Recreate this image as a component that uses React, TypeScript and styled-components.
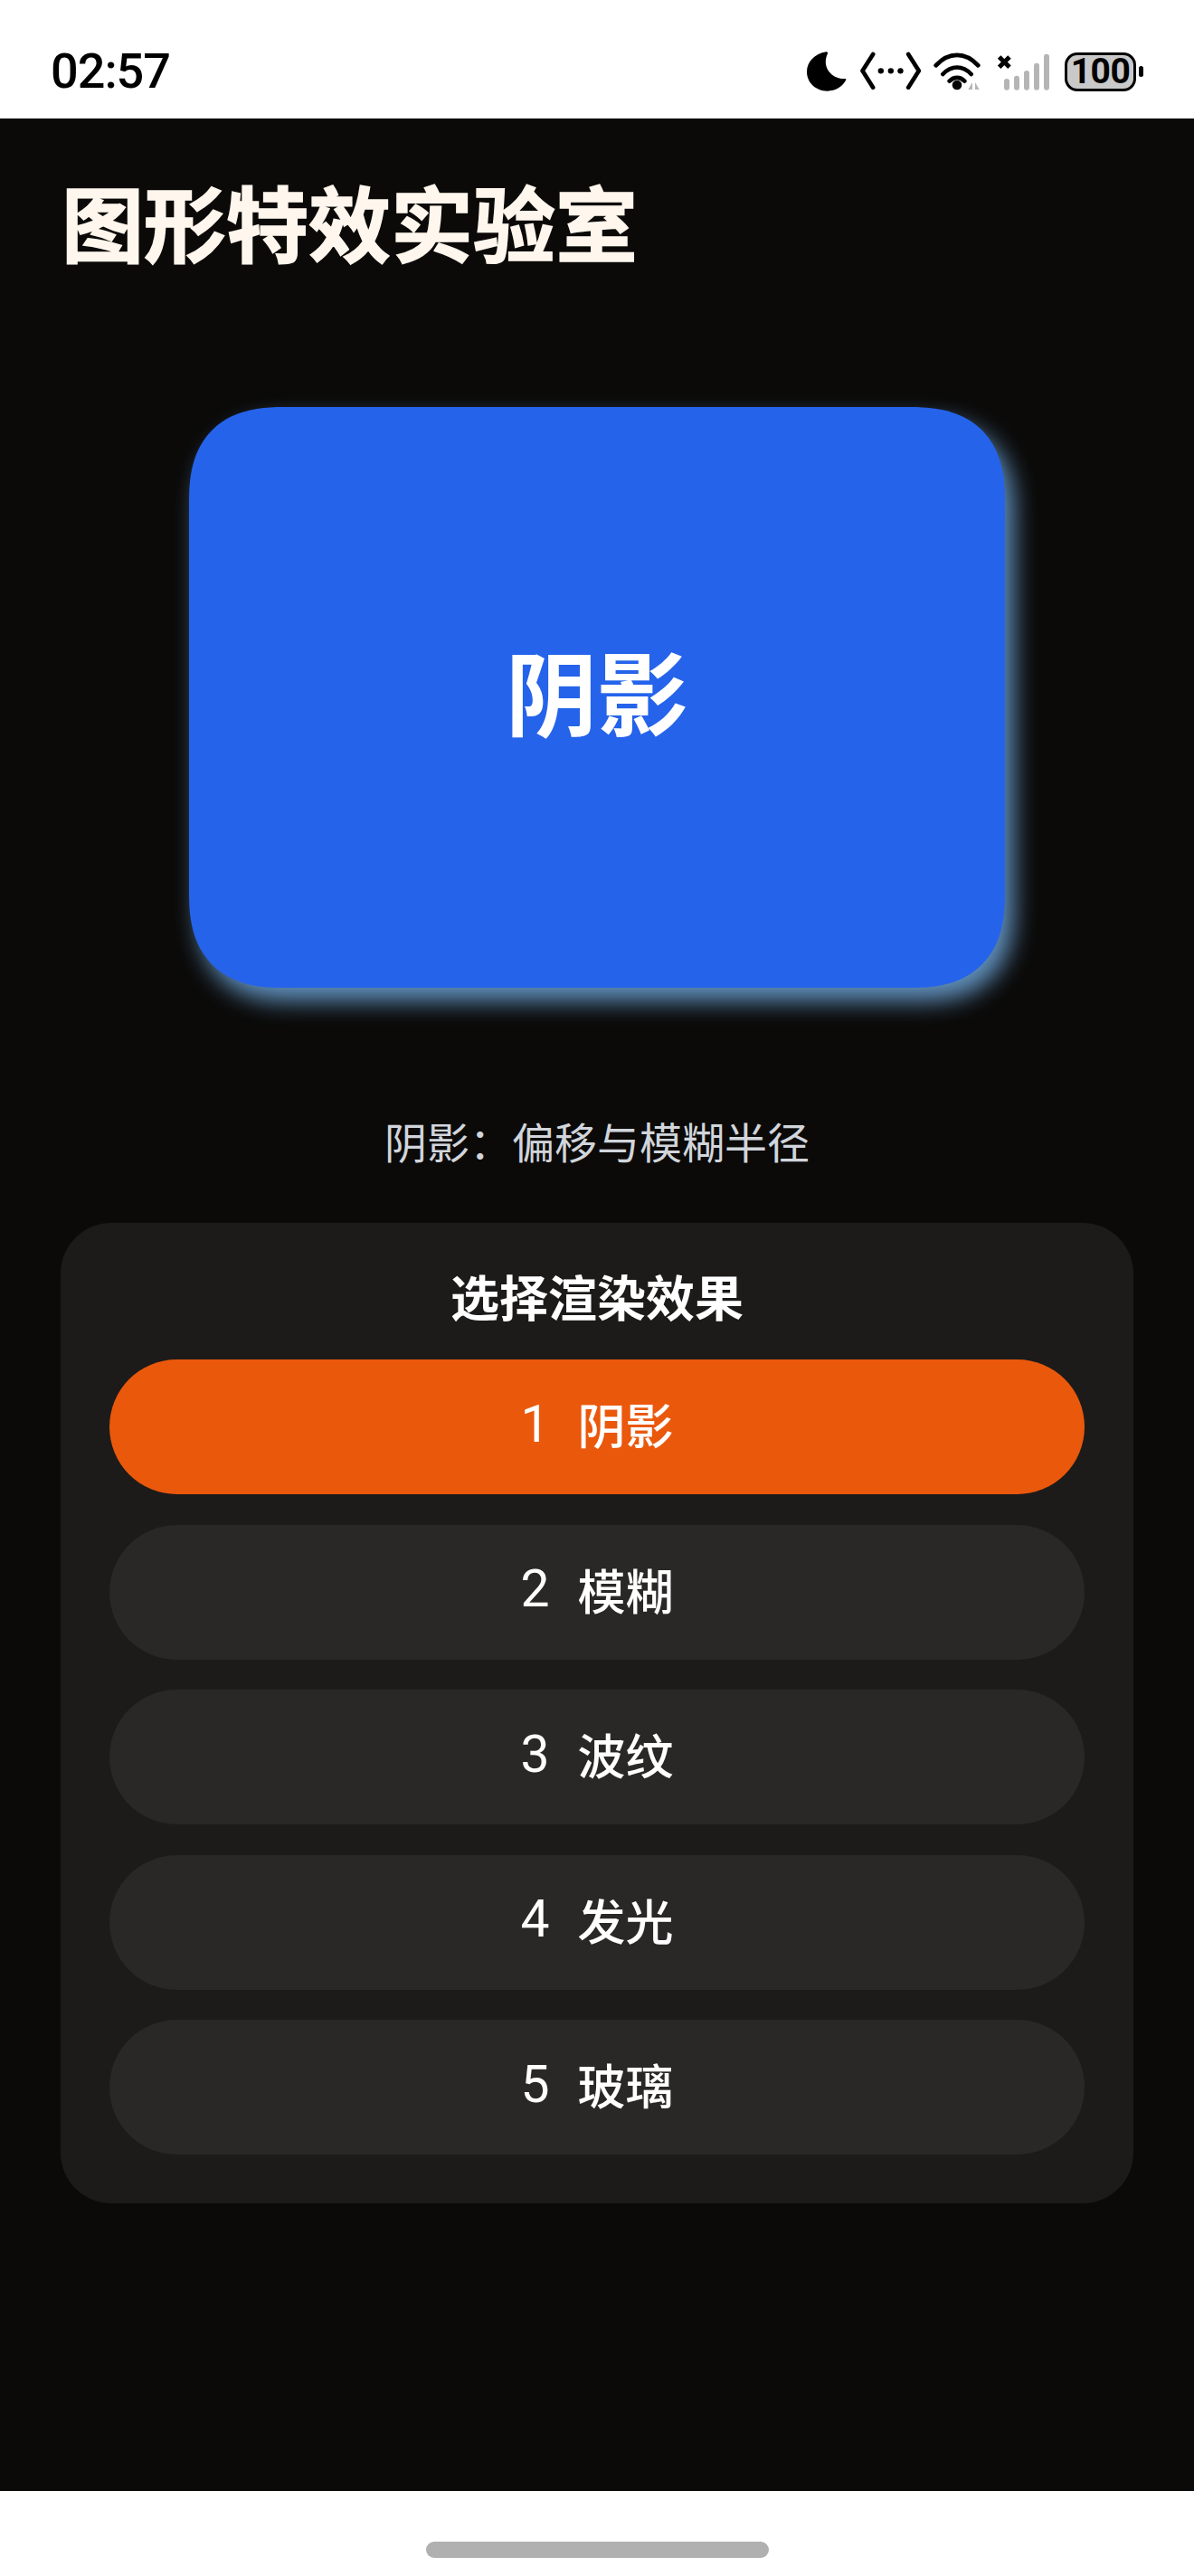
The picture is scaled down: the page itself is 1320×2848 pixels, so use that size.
import styled, { createGlobalStyle } from 'styled-components';

const GlobalStyle = createGlobalStyle`
  html, body {
    margin: 0;
    padding: 0;
    background: #fff;
  }
  * {
    box-sizing: border-box;
  }
`;

const CJK = `Roboto, "Noto Sans CJK SC", sans-serif`;

const SScreen = styled.div`
  display: flex;
  flex-direction: column;
  width: 1320px;
  height: 2848px;
  font-family: ${CJK};
`;

const SStatusBar = styled.div`
  display: flex;
  align-items: center;
  justify-content: space-between;
  height: 131px;
  padding: 27px 64px 0 56px;
  background: #fff;
  flex-shrink: 0;
`;

const STime = styled.div`
  font-family: Roboto, sans-serif;
  font-size: 54px;
  font-weight: 500;
  letter-spacing: -1px;
  line-height: 60px;
  color: #000;
`;

const SStatusIcons = styled.div`
  display: flex;
  align-items: center;
  height: 44px;
`;

const SIcon = styled.svg<{ $gap: number }>`
  display: block;
  margin-right: ${(p) => p.$gap}px;
  flex-shrink: 0;
`;

const SBattery = styled.div`
  position: relative;
  display: flex;
  align-items: center;
  justify-content: center;
  width: 79px;
  height: 43px;
  border: 3.5px solid #000;
  border-radius: 14px;
  background: #c9c9c9;
  font-family: Roboto, sans-serif;
  font-size: 39px;
  font-weight: 700;
  letter-spacing: -0.5px;
  color: #000;

  &::after {
    content: '';
    position: absolute;
    right: -11px;
    top: 12px;
    width: 5px;
    height: 12px;
    border-radius: 3px;
    background: #000;
  }
`;

const SMain = styled.main`
  flex: 1;
  display: flex;
  flex-direction: column;
  align-items: center;
  padding-top: 71px;
  background: #0b0a09;
`;

const STitle = styled.h1`
  align-self: flex-start;
  margin: 0 0 0 68px;
  font-size: 91px;
  font-weight: 700;
  line-height: 100px;
  color: #fff7ed;
  -webkit-text-stroke: 1.5px #fff7ed;
`;

const SEffectCard = styled.div`
  display: flex;
  align-items: center;
  justify-content: center;
  width: 902px;
  height: 642px;
  margin-top: 148px;
  padding-bottom: 18px;
  border-radius: 104px;
  corner-shape: superellipse(1.3);
  background: #2563eb;
  box-shadow: 10px 15px 26px rgba(125, 190, 250, 0.75);
  font-size: 101px;
  font-weight: 700;
  color: #fff;
`;

const SCaption = styled.div`
  margin-top: 141px;
  margin-bottom: -3px;
  font-size: 47px;
  font-weight: 400;
  line-height: 64px;
  color: #d1d5db;
`;

const SPanel = styled.section`
  display: flex;
  flex-direction: column;
  width: 1186px;
  margin-top: 58px;
  padding: 54px;
  border-radius: 56px;
  background: #1c1b1a;
`;

const SPanelTitle = styled.div`
  margin-bottom: 33px;
  font-size: 54px;
  font-weight: 700;
  line-height: 64px;
  text-align: center;
  color: #fff;
`;

const SOptions = styled.div`
  display: flex;
  flex-direction: column;
  gap: 33.5px;
`;

const SOption = styled.button<{ $active?: boolean }>`
  display: flex;
  align-items: center;
  justify-content: center;
  gap: 31px;
  height: 149px;
  padding: 0 0 7px;
  border: 0;
  border-radius: 75px;
  background: ${(p) => (p.$active ? '#ea580c' : '#2a2826')};
  font-family: ${CJK};
  font-size: 53px;
  font-weight: 500;
  color: #fff;
`;

const SOptionIndex = styled.span`
  font-size: 57px;
  font-weight: 400;
`;

const SNavBar = styled.div`
  display: flex;
  justify-content: center;
  height: 94px;
  padding-top: 56px;
  background: #fff;
  flex-shrink: 0;
`;

const SHandle = styled.div`
  width: 379px;
  height: 18px;
  border-radius: 9px;
  background: #b0b0b0;
`;

const options = ['阴影', '模糊', '波纹', '发光', '玻璃'];

const App = () => {
    return (
        <SScreen>
            <GlobalStyle />
            <SStatusBar>
                <STime>02:57</STime>
                <SStatusIcons>
                    {/* moon */}
                    <SIcon $gap={15} width="44" height="44" viewBox="0 0 132 132">
                        <path d="M64 1C26 6 0 35 0 67c0 37 30 64 68 64 27 0 50-14 62-37 1-3-1-4-4-4C88 93 46 56 69 6c1-3-2-5-5-5Z" fill="#000" />
                    </SIcon>
                    {/* dev / code */}
                    <SIcon $gap={14} width="67" height="44" viewBox="272 84 200 132">
                        <path d="M314 93 279 148l35 55M431 93l35 55-35 55" fill="none" stroke="#000" strokeWidth="14" strokeLinecap="round" strokeLinejoin="round" />
                        <circle cx="340" cy="148" r="9.5" fill="#000" />
                        <circle cx="373" cy="148" r="9.5" fill="#000" />
                        <circle cx="405" cy="148" r="9.5" fill="#000" />
                    </SIcon>
                    {/* wifi */}
                    <SIcon $gap={15} width="54" height="44" viewBox="522 80 162 132">
                        <path d="M530 126c42-46 98-46 140 0M553 155c28-30 66-30 94 0M575 178c15-15 35-15 50 0" fill="none" stroke="#000" strokeWidth="14" strokeLinecap="round" />
                        <circle cx="600" cy="191" r="16" fill="#000" />
                        <path d="M651 182v24h-14ZM660 182v24h14Z" fill="#b5b5b5" />
                    </SIcon>
                    {/* signal */}
                    <SIcon $gap={16} width="60" height="44" viewBox="724 80 180 132">
                        <path d="M735 98l34 34M769 98l-34 34" fill="none" stroke="#000" strokeWidth="15" />
                        <rect x="751" y="170" width="18" height="38" rx="9" fill="#b5b5b5" />
                        <rect x="784" y="160" width="18" height="48" rx="9" fill="#b5b5b5" />
                        <rect x="817" y="143" width="18" height="65" rx="9" fill="#b5b5b5" />
                        <rect x="850" y="118" width="18" height="90" rx="9" fill="#b5b5b5" />
                        <rect x="883" y="88" width="18" height="120" rx="9" fill="#b5b5b5" />
                    </SIcon>
                    <SBattery>100</SBattery>
                </SStatusIcons>
            </SStatusBar>
            <SMain>
                <STitle>图形特效实验室</STitle>
                <SEffectCard>阴影</SEffectCard>
                <SCaption>阴影：偏移与模糊半径</SCaption>
                <SPanel>
                    <SPanelTitle>选择渲染效果</SPanelTitle>
                    <SOptions>
                        {options.map((name, i) => (
                            <SOption key={name} $active={i === 0}>
                                <SOptionIndex>{i + 1}</SOptionIndex>
                                <span>{name}</span>
                            </SOption>
                        ))}
                    </SOptions>
                </SPanel>
            </SMain>
            <SNavBar>
                <SHandle />
            </SNavBar>
        </SScreen>
    );
};

export default App;
